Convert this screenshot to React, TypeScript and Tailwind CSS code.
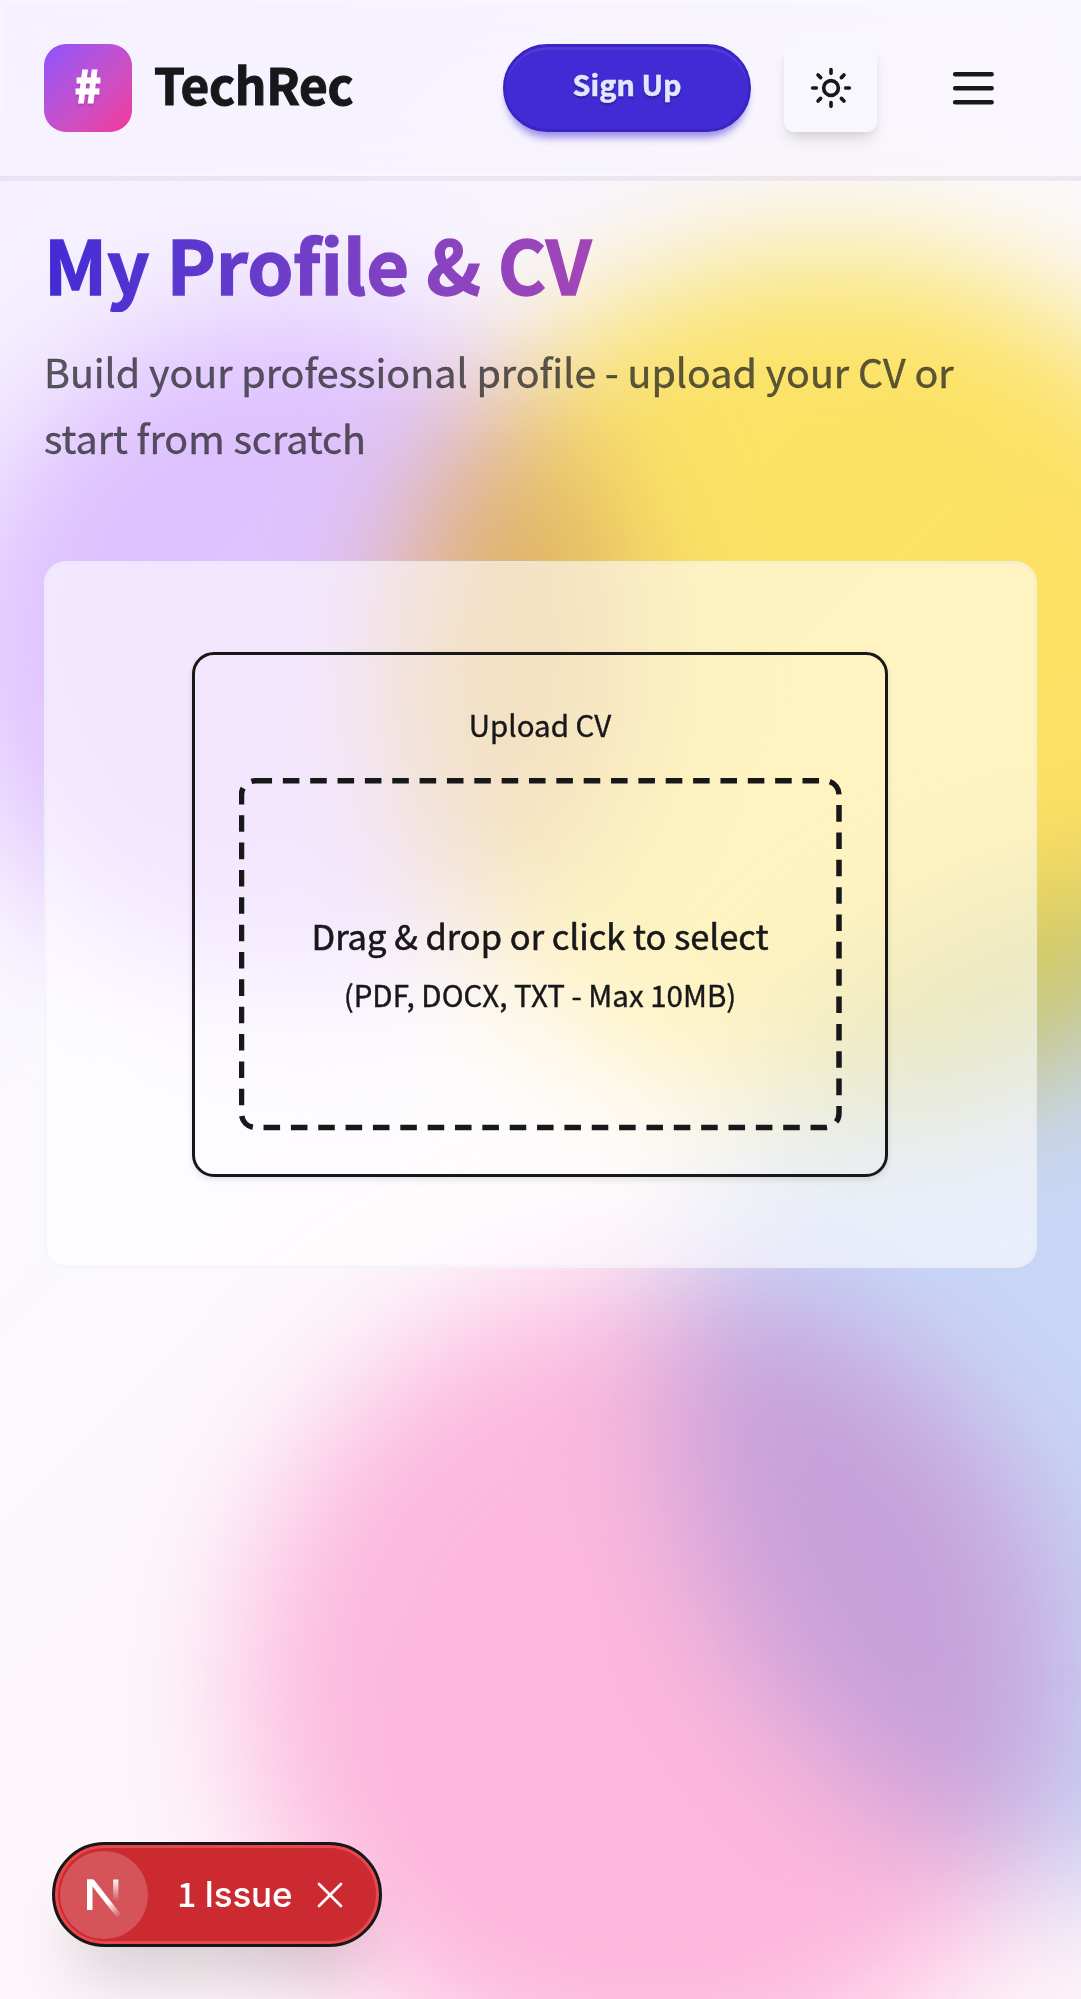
import React from "react";

function Backdrop() {
  return (
    <div className="absolute inset-0 overflow-hidden bg-[linear-gradient(135deg,#f3eeff_0%,#fbf9fe_38%,#fef4f9_75%)]">
      <div className="absolute left-[-45px] top-[310px] h-[680px] w-[680px] rounded-full bg-[#e5c9ff] mix-blend-multiply blur-[66px]" />
      <div className="absolute left-[395px] top-[255px] h-[860px] w-[880px] rounded-full bg-[#ffe966] mix-blend-multiply blur-[66px]" />
      <div className="absolute left-[245px] top-[1280px] h-[805px] w-[815px] rounded-full bg-[#fec0e2] mix-blend-multiply blur-[66px]" />
      <div className="absolute left-[670px] top-[880px] h-[1020px] w-[1020px] rounded-full bg-[#c9e0fc] mix-blend-multiply blur-[66px]" />
    </div>
  );
}

function SunIcon() {
  return (
    <svg viewBox="0 0 24 24" className="h-[44px] w-[44px]" fill="none" stroke="currentColor" strokeWidth="2" strokeLinecap="round" strokeLinejoin="round">
      <circle cx="12" cy="12" r="4" />
      <path d="M12 2v2M12 20v2M4.93 4.93l1.41 1.41M17.66 17.66l1.41 1.41M2 12h2M20 12h2M6.34 17.66l-1.41 1.41M19.07 4.93l-1.41 1.41" />
    </svg>
  );
}

function Header() {
  return (
    <header className="flex h-[181px] items-center border-b-[5px] border-[#18181b]/6 bg-[#f8f5fe]/45 px-[44px] shadow-[inset_0_0_0_3px_rgba(255,255,255,0.2)] backdrop-blur-[22px]">
      <div className="flex h-[88px] w-[88px] items-center justify-center rounded-[22px] bg-linear-to-br from-[#8e51ff] to-[#f6339a] text-[44px] font-black text-white [text-shadow:0_2px_3px_rgba(0,0,0,0.2)]">
        <span className="-mt-[9px] [-webkit-text-stroke:1.2px_white]">#</span>
      </div>
      <span className="-mt-[7px] ml-[22px] text-[49.5px] font-bold tracking-[-0.3px] [-webkit-text-stroke:1.1px_#18181b]">TechRec</span>
      <button className="ml-auto flex h-[88px] w-[248px] items-center justify-center rounded-full border-[3px] border-[#3b24c4] bg-[#422ad5] text-[28.8px] font-bold text-[#e0e7ff] shadow-[inset_0_3px_0_rgba(255,255,255,0.08),0_8px_8px_-4px_rgba(66,42,213,0.4),0_11px_9px_-5px_rgba(66,42,213,0.25)] [text-shadow:0_2px_2px_rgba(0,0,0,0.3)]">
        <span className="-mt-[9px] [-webkit-text-stroke:0.5px_#e0e7ff]">Sign Up</span>
      </button>
      <button className="ml-[33px] flex h-[88px] w-[93px] items-center justify-center rounded-[11px] bg-[#faf7fe]/70 shadow-[0_11px_16px_-3px_rgba(0,0,0,0.1),0_5px_11px_-5px_rgba(0,0,0,0.12)]">
        <SunIcon />
      </button>
      <button className="ml-[69px] mr-[36px] flex h-[88px] w-[55px] items-center justify-center">
        <svg viewBox="0 0 55 55" className="h-[55px] w-[55px]" fill="none" stroke="currentColor" strokeWidth="4.6" strokeLinecap="round">
          <path d="M9.2 13.2h36.4M9.2 27.3h36.4M9.2 41.3h36.4" />
        </svg>
      </button>
    </header>
  );
}

function Dropzone() {
  return (
    <div className="relative mt-[29px] flex h-[353px] w-[603px] flex-col items-center justify-center pt-[20px]">
      <svg className="absolute inset-0 h-full w-full" viewBox="0 0 603 353" fill="none" stroke="#18181b" strokeWidth="5.5">
        <rect x="2.5" y="2.75" width="597.5" height="346.8" rx="14" strokeDasharray="16.55 10.8" />
      </svg>
      <p className="text-[34.5px] leading-[50px] [-webkit-text-stroke:0.6px_#18181b]">Drag &amp; drop or click to select</p>
      <p className="mt-[8px] text-[29.5px] leading-[52px] [-webkit-text-stroke:0.4px_#18181b]">(PDF, DOCX, TXT - Max 10MB)</p>
    </div>
  );
}

function IssueBadge() {
  return (
    <div className="absolute left-[52px] top-[1842px] flex h-[105px] w-[330px] items-center rounded-full border-[3px] border-[#171717] bg-[#ca2a30] text-white shadow-[inset_0_0_0_3px_#e5484d,0_44px_66px_-22px_rgba(0,0,0,0.2)]">
      <div className="ml-[5px] flex h-[88px] w-[88px] items-center justify-center rounded-full bg-white/20">
        <svg viewBox="0 0 88 88" className="h-[88px] w-[88px]" fill="none">
          <defs>
            <linearGradient id="diag" gradientUnits="userSpaceOnUse" x1="50" y1="50" x2="61" y2="65">
              <stop stopColor="white" />
              <stop offset="1" stopColor="white" stopOpacity="0" />
            </linearGradient>
            <linearGradient id="stem" gradientUnits="userSpaceOnUse" x1="56" y1="28" x2="56" y2="50">
              <stop stopColor="white" />
              <stop offset="1" stopColor="white" stopOpacity="0" />
            </linearGradient>
          </defs>
          <path d="M27 59V28.5h5.5V59z" fill="white" />
          <path d="M27 28.5h6.7L61.5 64l-4.2 3z" fill="url(#diag)" />
          <path d="M53.2 28.5h5.2V52h-5.2z" fill="url(#stem)" />
        </svg>
      </div>
      <span className="-mt-[3px] ml-[29px] flex items-baseline font-[Inter] text-[35px] font-medium leading-[44px]">
        <span className="font-['Noto_Sans_CJK_SC'] text-[34px] leading-[44px]">1</span>
        <span className="ml-[8px] tracking-[-0.2px]">Issue</span>
      </span>
      <svg viewBox="0 0 26 26" className="ml-[25px] h-[26px] w-[26px]" stroke="white" strokeWidth="2.7" strokeLinecap="round">
        <path d="M2 2l22 22M24 2L2 24" />
      </svg>
    </div>
  );
}

export default function App() {
  return (
    <div className="relative h-[1999px] w-[1081px] overflow-hidden font-['Noto_Sans_CJK_SC',sans-serif] text-[#18181b]">
      <Backdrop />
      <div className="relative">
        <Header />
        <main className="px-[44px]">
          <h1 className="mt-[32px] w-[994px] bg-linear-to-r from-[#422ad5] to-[#f43098] bg-clip-text text-[74px] font-bold leading-[99px] text-transparent [-webkit-text-stroke:1.3px_transparent]">
            My Profile &amp; CV
          </h1>
          <p className="mt-[26px] text-[39.4px] leading-[66px] text-[#18181b]/70 [-webkit-text-stroke:0.4px_rgba(24,24,27,0.7)]">
            Build your professional profile - upload your CV or start from scratch
          </p>
          <section className="mt-[91px] flex h-[707px] justify-center rounded-[22px] border-[3px] border-[#e4e4ee]/25 bg-white/60 pt-[88px]">
            <div className="-ml-px flex h-[525px] w-[696px] flex-col items-center rounded-[22px] border-[3px] border-[#18181b] pt-[44px] shadow-[0_3px_6px_rgba(0,0,0,0.1)]">
              <p className="text-[29.5px] leading-[50px] [-webkit-text-stroke:0.4px_#18181b]">Upload CV</p>
              <Dropzone />
            </div>
          </section>
        </main>
      </div>
      <IssueBadge />
    </div>
  );
}
